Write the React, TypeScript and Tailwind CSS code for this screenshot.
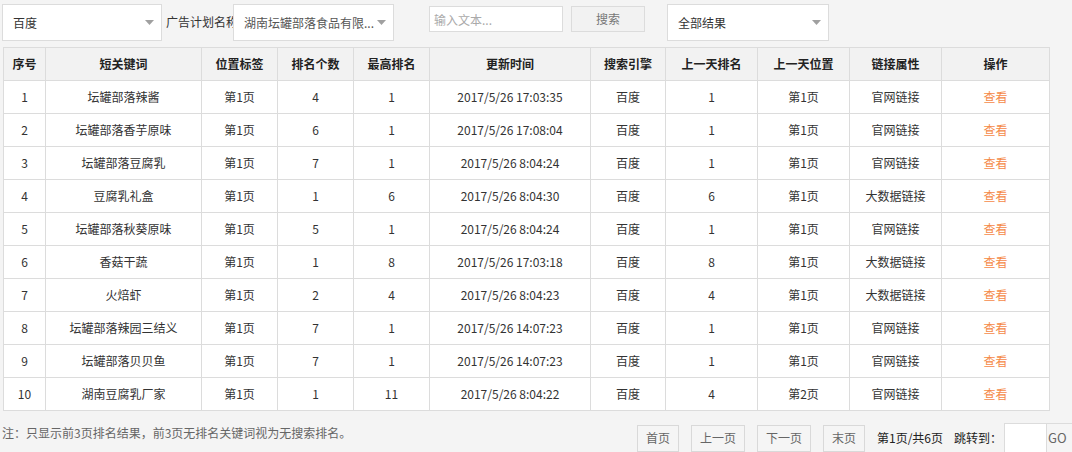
import React from "react";

const rows = [
  ["1", "坛罐部落辣酱", "第1页", "4", "1", "2017/5/26 17:03:35", "百度", "1", "第1页", "官网链接"],
  ["2", "坛罐部落香芋原味", "第1页", "6", "1", "2017/5/26 17:08:04", "百度", "1", "第1页", "官网链接"],
  ["3", "坛罐部落豆腐乳", "第1页", "7", "1", "2017/5/26 8:04:24", "百度", "1", "第1页", "官网链接"],
  ["4", "豆腐乳礼盒", "第1页", "1", "6", "2017/5/26 8:04:30", "百度", "6", "第1页", "大数据链接"],
  ["5", "坛罐部落秋葵原味", "第1页", "5", "1", "2017/5/26 8:04:24", "百度", "1", "第1页", "官网链接"],
  ["6", "香菇干蔬", "第1页", "1", "8", "2017/5/26 17:03:18", "百度", "8", "第1页", "大数据链接"],
  ["7", "火焙虾", "第1页", "2", "4", "2017/5/26 8:04:23", "百度", "4", "第1页", "大数据链接"],
  ["8", "坛罐部落辣园三结义", "第1页", "7", "1", "2017/5/26 14:07:23", "百度", "1", "第1页", "官网链接"],
  ["9", "坛罐部落贝贝鱼", "第1页", "7", "1", "2017/5/26 14:07:23", "百度", "1", "第1页", "官网链接"],
  ["10", "湖南豆腐乳厂家", "第1页", "1", "11", "2017/5/26 8:04:22", "百度", "4", "第2页", "官网链接"],
];

const headers = ["序号", "短关键词", "位置标签", "排名个数", "最高排名", "更新时间", "搜索引擎", "上一天排名", "上一天位置", "链接属性", "操作"];
const widths = [42, 156, 76, 76, 76, 161, 75, 92, 92, 92, 108];

const Caret = () => (
  <svg width="9" height="5" viewBox="0 0 9 5" className="shrink-0">
    <path d="M0 0 H9 L4.5 5 Z" fill="#a0a0a0" />
  </svg>
);

const Select = ({ text, className }: { text: string; className: string }) => (
  <div
    className={`flex h-[37px] items-center justify-between border border-[#dcdcdc] bg-white pl-[10px] pr-[7px] text-[12px] text-[#333] ${className}`}
  >
    <span className="truncate">{text}</span>
    <Caret />
  </div>
);

const PageButton = ({ label, w }: { label: string; w: string }) => (
  <button className={`h-[27px] ${w} border border-[#d9d9d9] bg-[#f5f5f5] text-[12px] text-[#666]`}>{label}</button>
);

export default function App() {
  return (
    <div
      className="h-[452px] w-[1072px] overflow-hidden bg-[#f4f4f4] text-[12px] text-[#333]"
      style={{ fontFamily: '"Noto Sans CJK SC", "Liberation Sans", sans-serif' }}
    >
      {/* filters */}
      <div className="flex items-start pl-[2px] pt-[4px]">
        <Select text="百度" className="w-[160px]" />
        <div className="ml-[4px] mt-[10px] w-[67px] overflow-hidden whitespace-nowrap text-[12px] leading-[16px] text-[#333]">
          广告计划名称
        </div>
        <Select text="湖南坛罐部落食品有限..." className="w-[161px] text-[#555]" />
        <input
          placeholder="输入文本..."
          className="ml-[35px] mt-[2px] h-[26px] w-[134px] border border-[#dcdcdc] bg-white px-[4px] text-[12px] outline-none placeholder:text-[#aaa]"
        />
        <button className="ml-[8px] mt-[2px] h-[26px] w-[74px] border border-[#dcdcdc] bg-[#f2f2f2] text-[12px] text-[#777]">
          搜索
        </button>
        <Select text="全部结果" className="ml-[22px] w-[162px]" />
      </div>

      {/* table */}
      <table className="ml-[3px] mt-[6px] table-fixed border-collapse">
        <colgroup>
          {widths.map((w, i) => (
            <col key={i} style={{ width: w }} />
          ))}
        </colgroup>
        <thead>
          <tr className="h-[33px] bg-[#f2f2f2]">
            {headers.map((h) => (
              <th key={h} className="border border-[#dcdcdc] p-0 text-center text-[12px] font-bold text-[#222]">
                {h}
              </th>
            ))}
          </tr>
        </thead>
        <tbody>
          {rows.map((r) => (
            <tr key={r[0]} className="h-[33px] bg-white">
              {r.map((c, i) => (
                <td key={i} className="border border-[#dcdcdc] p-0 text-center text-[12px] text-[#333]">
                  {c}
                </td>
              ))}
              <td className="border border-[#dcdcdc] p-0 text-center text-[12px] text-[#f58a48]">查看</td>
            </tr>
          ))}
        </tbody>
      </table>

      {/* footer */}
      <div className="mt-[12px] flex items-start">
        <div className="ml-[2px] mt-[1px] w-[635px] shrink-0 text-[12px] leading-[18px] text-[#666]">
          注：只显示前3页排名结果，前3页无排名关键词视为无搜索排名。
        </div>
        <div className="flex shrink-0 items-center">
          <PageButton label="首页" w="w-[42px]" />
          <div className="ml-[12px]"><PageButton label="上一页" w="w-[54px]" /></div>
          <div className="ml-[12px]"><PageButton label="下一页" w="w-[54px]" /></div>
          <div className="ml-[12px]"><PageButton label="末页" w="w-[42px]" /></div>
          <span className="ml-[12px] text-[12px] text-[#222]">第1页/共6页</span>
          <span className="ml-[11px] text-[12px] text-[#222]">跳转到：</span>
          <div className="ml-[2px] flex h-[30px]">
            <input className="h-[30px] w-[43px] border border-[#dcdcdc] bg-white outline-none" />
            <button className="h-[30px] w-[34px] border border-l-0 border-[#dcdcdc] bg-[#f5f5f5] pl-[1px] text-left text-[13px] text-[#666]">
              GO
            </button>
          </div>
        </div>
      </div>
    </div>
  );
}
